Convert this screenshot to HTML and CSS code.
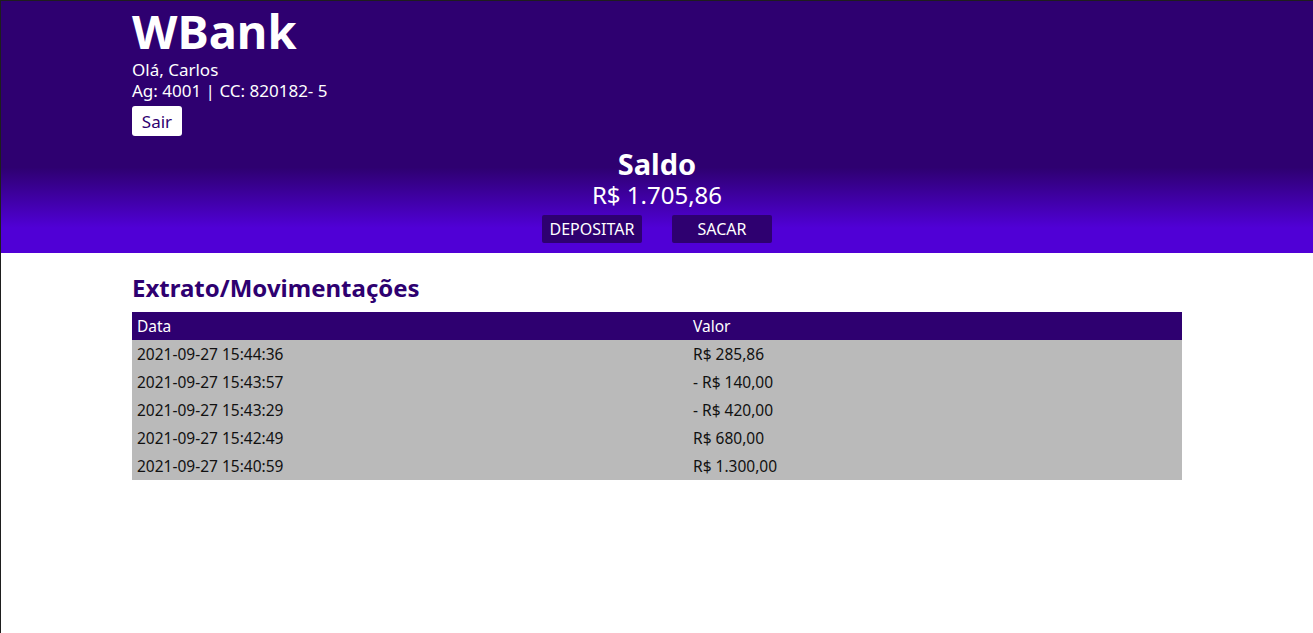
FILE: index.html
```html
<!DOCTYPE html>
<html lang="pt-BR">
<head>
<meta charset="utf-8">
<title>WBank</title>
<link rel="stylesheet" href="styles.css">
</head>
<body>
<div class="frame">
  <header class="topo">
    <div class="container">
      <h1 class="logo">WBank</h1>
      <p class="info">Olá, Carlos</p>
      <p class="info">Ag: 4001 | CC: 820182- 5</p>
      <button class="btn-sair">Sair</button>
    </div>
    <div class="saldo">
      <h2 class="saldo-titulo">Saldo</h2>
      <p class="saldo-valor">R$ 1.705,86</p>
      <div class="acoes">
        <button class="btn-acao">DEPOSITAR</button>
        <button class="btn-acao">SACAR</button>
      </div>
    </div>
  </header>
  <main class="container">
    <h2 class="extrato-titulo">Extrato/Movimentações</h2>
    <table class="tabela">
      <thead>
        <tr><th class="col-data">Data</th><th>Valor</th></tr>
      </thead>
      <tbody>
        <tr><td>2021-09-27 15:44:36</td><td>R$ 285,86</td></tr>
        <tr><td>2021-09-27 15:43:57</td><td>- R$ 140,00</td></tr>
        <tr><td>2021-09-27 15:43:29</td><td>- R$ 420,00</td></tr>
        <tr><td>2021-09-27 15:42:49</td><td>R$ 680,00</td></tr>
        <tr><td>2021-09-27 15:40:59</td><td>R$ 1.300,00</td></tr>
      </tbody>
    </table>
  </main>
</div>
</body>
</html>
```
FILE: styles.css
```css
* { box-sizing: border-box; }
html, body { margin: 0; padding: 0; height: 100%; }
body {
  font-family: "Noto Sans", "Open Sans", sans-serif;
  background: #ffffff;
  color: #111;
}
.frame {
  min-height: 100%;
  border-top: 1px solid #1e1e1e;
  border-left: 1px solid #1e1e1e;
}
.container {
  width: 1050px;
  margin-left: 131px;
}
.topo {
  background: linear-gradient(to bottom, #2e0070 0%, #2e0070 66%, #5000d6 90%, #5000d6 100%);
  color: #ffffff;
  padding-bottom: 10px;
}
.logo {
  margin: 0;
  height: 58px;
  font-size: 47px;
  line-height: 60px;
  font-weight: 700;
}
.info {
  margin: 0;
  font-size: 17px;
  line-height: 21px;
}
.btn-sair {
  margin-top: 5px;
  background: #ffffff;
  color: #2e0070;
  border: none;
  border-radius: 3px;
  font-family: inherit;
  font-size: 17px;
  height: 30px;
  width: 50px;
  padding: 0;
}
.saldo {
  text-align: center;
  margin-top: 12px;
}
.saldo-titulo {
  margin: 0;
  font-size: 29px;
  line-height: 32px;
  font-weight: 700;
}
.saldo-valor {
  margin: 0;
  font-size: 24px;
  line-height: 30px;
}
.acoes {
  display: flex;
  justify-content: center;
  gap: 30px;
  margin-top: 5px;
}
.btn-acao {
  width: 100px;
  height: 28px;
  padding: 0;
  background: #2e0070;
  color: #ffffff;
  border: none;
  border-radius: 2px;
  font-family: inherit;
  font-size: 16px;
}
.extrato-titulo {
  margin: 20px 0 10px;
  font-size: 24px;
  line-height: 29px;
  color: #2e0070;
  font-weight: 700;
}
.tabela {
  width: 100%;
  border-collapse: collapse;
  font-size: 15.5px;
}
.tabela th, .tabela td {
  text-align: left;
  font-weight: 400;
  padding: 0 5px;
  height: 28px;
  line-height: 28px;
}
.tabela th {
  background: #2e0070;
  color: #ffffff;
}
.tabela td {
  background: #bababa;
  color: #111;
}
.col-data { width: 556px; }
```
